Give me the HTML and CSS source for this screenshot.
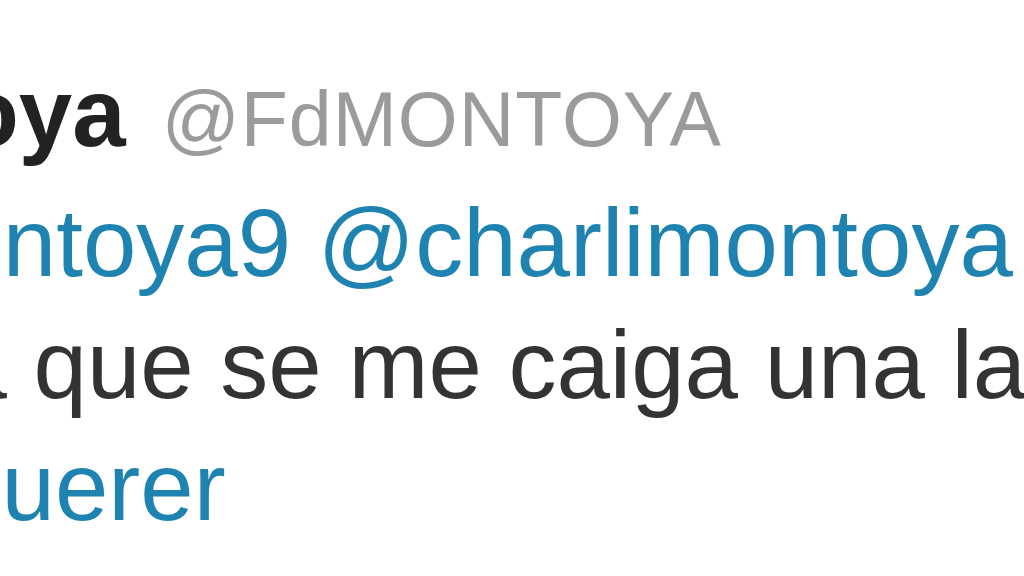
FILE: index.html
```html
<!DOCTYPE html>
<html lang="es">
<head>
<meta charset="utf-8">
<title>Tweet</title>
<link rel="stylesheet" href="styles.css">
</head>
<body>
<div class="viewport">
  <article class="tweet">
    <header class="tweet-header">
      <strong class="name">Montoya</strong><span class="screen-name">@FdMONTOYA</span>
    </header>
    <p class="tweet-text"><a class="mention" href="#">@montoya9</a> <a class="mention" href="#">@charlimontoya</a> y<br>hasta que se me caiga una lagrima de<br><a class="hashtag" href="#">#sinquerer</a></p>
  </article>
</div>
</body>
</html>
```

FILE: styles.css
```css
html, body {
  margin: 0;
  padding: 0;
  background: #ffffff;
}

.viewport {
  width: 1024px;
  height: 576px;
  overflow: hidden;
  background: #ffffff;
}

.tweet {
  margin-left: -228px;
  padding-top: 63px;
  font-family: "Liberation Sans", Arial, sans-serif;
  white-space: nowrap;
}

.tweet-header {
  margin-left: -41px;
  font-size: 96px;
  line-height: 100px;
  height: 100px;
}

.name {
  font-weight: bold;
  color: #222222;
}

.screen-name {
  margin-left: 36px;
  font-size: 77px;
  line-height: 1;
  letter-spacing: 1px;
  font-weight: normal;
  color: #9b9b9b;
}

.tweet-text {
  margin: 19px 0 0 0;
  font-size: 96px;
  line-height: 122px;
  color: #333333;
}

.mention,
.hashtag {
  color: #1f83b2;
  text-decoration: none;
}
```
